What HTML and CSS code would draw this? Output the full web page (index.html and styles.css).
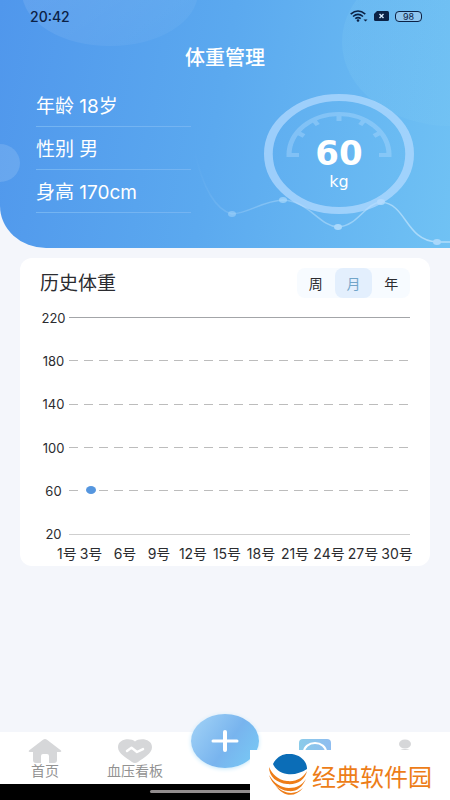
FILE: index.html
```html
<!DOCTYPE html>
<html lang="zh-CN">
<head>
<meta charset="utf-8">
<meta name="viewport" content="width=device-width, initial-scale=1">
<title>体重管理</title>
<link rel="stylesheet" href="styles.css">
</head>
<body>
<header class="hero">
  <svg class="hero-art" viewBox="0 0 450 248" preserveAspectRatio="none" aria-hidden="true">
    <defs>
      <linearGradient id="bubble" x1="0" y1="0" x2="1" y2="1"><stop offset="0" stop-color="#fff" stop-opacity=".12"/><stop offset="1" stop-color="#fff" stop-opacity=".03"/></linearGradient>
      <linearGradient id="glow" x1="0" y1="0" x2="1" y2="0"><stop offset="0" stop-color="#8bd2f4" stop-opacity=".16"/><stop offset="1" stop-color="#8bd2f4" stop-opacity=".04"/></linearGradient>
      <linearGradient id="trend" x1="0" x2="1" y1="0" y2="0"><stop offset="0" stop-color="#fff" stop-opacity="0"/><stop offset=".3" stop-color="#d5edff" stop-opacity=".3"/><stop offset="1" stop-color="#d5edff" stop-opacity=".65"/></linearGradient>
    </defs>
    <ellipse cx="110" cy="-8" rx="88" ry="54" fill="url(#bubble)"/>
    <ellipse cx="0" cy="163" rx="20" ry="19" fill="#fff" opacity=".13"/>
    <ellipse cx="450" cy="42" rx="108" ry="84" fill="url(#glow)"/>
    <path d="M194 150C201 180 212 209 232 214C250 213 262 201 283 200C309 201 319 226 338 227C358 226 365 203 381 202C407 204 405 240 437 242H450" fill="none" stroke="url(#trend)" stroke-width="1.5"/>
    <g fill="#a9d8fb"><ellipse cx="232" cy="214" rx="4" ry="3" opacity=".5"/><ellipse cx="283" cy="200" rx="4" ry="3" opacity=".7"/><ellipse cx="338" cy="227" rx="4" ry="3"/><ellipse cx="381" cy="202" rx="4" ry="3"/><ellipse cx="437" cy="242" rx="4" ry="3"/></g>
  </svg>
  <div class="status">
    <time>20:42</time>
    <div class="status-icons">
      <svg width="18" height="12" viewBox="0 0 18 12" aria-hidden="true"><g fill="none" stroke="#0b2145" stroke-width="1.6"><path d="M.7 4.2Q8-2.2 15.3 4.2M3 6.5Q8 2.2 13 6.5M5.3 8.7Q8 6.4 10.7 8.7"/></g><circle cx="8" cy="10.5" r="1.3" fill="#0b2145"/><path d="M13.5 9.5h4l-2 2z" fill="#0b2145"/></svg>
      <svg width="15" height="10" viewBox="0 0 15 10" aria-hidden="true"><path d="M3 0H13.500Q15 0 15 1.500V8.500Q15 10 13.500 10H1.500Q0 10 0 8.500V3Z" fill="#0b2145"/><path d="M5.500 3l4 4m0-4l-4 4" stroke="#d7ebff" stroke-width="1.400"/></svg>
      <span class="battery">98</span>
    </div>
  </div>
  <h1>体重管理</h1>
  <div class="summary">
    <ul class="profile">
      <li>年龄 18岁</li>
      <li>性别 男</li>
      <li>身高 170cm</li>
    </ul>
    <div class="gauge">
      <svg class="dial" viewBox="0 0 150 120" aria-hidden="true">
        <g transform="scale(1.25 1)" fill="none" stroke="#b6dcff">
          <circle cx="60" cy="60" r="56.500" stroke-width="7" opacity=".7"/>
          <path opacity=".38" d="M18 61H28M102 61H92M20 61A40 41 0 0 1 100 61M26 38L32 42M94 38L88 42M39 25L43 31M81 25L77 31M60 20V27" stroke-width="4"/>
        </g>
      </svg>
      <strong>60</strong>
      <span>kg</span>
    </div>
  </div>
</header>
<main>
  <section class="card">
    <div class="card-head">
      <h2>历史体重</h2>
      <div class="tabs">
        <button type="button">周</button>
        <button type="button" class="active">月</button>
        <button type="button">年</button>
      </div>
    </div>
    <div class="chart">
      <div class="level solid"><span>220</span><i></i></div>
      <div class="level"><span>180</span><i></i></div>
      <div class="level"><span>140</span><i></i></div>
      <div class="level"><span>100</span><i></i></div>
      <div class="level"><span>60</span><i><b class="point"></b></i></div>
      <div class="level solid base"><span>20</span><i></i></div>
    </div>
    <div class="days">
      <span>1号</span><span>3号</span><span>6号</span><span>9号</span><span>12号</span><span>15号</span><span>18号</span><span>21号</span><span>24号</span><span>27号</span><span>30号</span>
    </div>
  </section>
</main>
<footer>
  <nav>
    <a href="#home">
      <svg width="34" height="24" viewBox="0 0 34 24" aria-hidden="true"><path d="M15 .8Q17-.6 19 .8L33 11.500Q34 13 32 13H29V21Q29 24 26 24H21V17Q21 15 19 15H15Q13 15 13 17V24H8Q5 24 5 21V13H2Q0 13 1 11.500Z" fill="#d6d7d9"/></svg>
      <span>首页</span>
    </a>
    <a href="#pressure">
      <svg width="34" height="24" viewBox="0 0 34 25" preserveAspectRatio="none" aria-hidden="true"><path d="M17 2.500C13-1.500 0-1 0 8.500C0 15 8 19 14 24Q17 26 20 24C26 19 34 15 34 8.500C34-1 21-1.500 17 2.500Z" fill="#d6d7d9"/><path d="M9 12.500L13.500 9L19 13.500L25 10.500" fill="none" stroke="#fff" stroke-width="2.500" stroke-linecap="round" stroke-linejoin="round"/></svg>
      <span>血压看板</span>
    </a>
    <button class="add" type="button" aria-label="添加">
      <svg width="28" height="22" viewBox="0 0 28 22" aria-hidden="true"><path d="M2 11H26" stroke="#fff" stroke-width="3" stroke-linecap="round"/><path d="M14 2V20" stroke="#fff" stroke-width="4" stroke-linecap="round"/></svg>
    </button>
    <a href="#weight" aria-label="体重">
      <svg width="32" height="25" viewBox="0 0 32 25" aria-hidden="true"><defs><linearGradient id="scale"><stop offset="0" stop-color="#8acbe9"/><stop offset="1" stop-color="#8fbdf0"/></linearGradient></defs><rect width="32" height="25" rx="4" fill="url(#scale)"/><ellipse cx="16" cy="13" rx="11" ry="9" fill="none" stroke="#fff" stroke-width="2"/></svg>
    </a>
    <a href="#me" aria-label="我的">
      <svg width="32" height="25" viewBox="0 0 32 25" aria-hidden="true"><ellipse cx="16" cy="5" rx="6" ry="4.500" fill="#d6d7d9"/><path d="M5 25Q5 10 16 10T27 25Z" fill="#d6d7d9"/></svg>
    </a>
  </nav>
  <div class="system"><i></i></div>
  <div class="brand">
    <svg width="40" height="42" viewBox="0 0 40 42" aria-hidden="true"><path d="M5 10C9 2 16-1 24 0C32 1 39 7 39 15C33 19 26 21 19 20C12 19 7 15 5 10Z" fill="#0b6db7"/><g fill="#ee7d18"><path d="M1 13C4 20 10 26 19 27C28 28 35 24 39 17C37 26 29 31 19 30C9 29 1 23 1 13Z"/><path d="M1 21C6 29 13 34 21 34C29 34 34 31 38 25C34 34 28 38 20 37C11 36 4 30 1 21Z"/><path d="M7 31C17 41 27 41 35 34C27 44 15 43 7 31Z"/></g></svg>
    <span>经典软件园</span>
  </div>
</footer>
</body>
</html>
```
FILE: styles.css
```css
* { box-sizing: border-box; }
body {
  margin: 0;
  min-height: 100vh;
  display: flex;
  flex-direction: column;
  background: #f4f6fb;
  color: #2b2c30;
  font-family: Inter, "Noto Sans CJK SC", sans-serif;
}
h1, h2, ul { margin: 0; padding: 0; font-weight: 400; }
button { border: 0; padding: 0; font: inherit; color: inherit; background: none; }

.hero {
  position: relative;
  overflow: hidden;
  min-height: 248px;
  border-bottom-left-radius: 46px 42px;
  background: linear-gradient(100deg, #5097ec 0%, #5ba9ef 48%, #70c2f4 100%);
  color: #fff;
}
.hero-art { position: absolute; inset: 0; width: 100%; height: 100%; }
.status, .hero h1, .summary { position: relative; }
.status {
  display: flex;
  justify-content: space-between;
  align-items: center;
  height: 32px;
  padding: 0 28px 0 30px;
  color: #0b2145;
}
.status time { font-size: 14px; font-weight: 500; }
.status-icons { display: flex; align-items: center; gap: 6px; }
.battery {
  width: 27px;
  height: 11px;
  border: 1px solid #0b2145;
  border-radius: 4px;
  background: #8fc5ee;
  font-size: 9px;
  line-height: 9px;
  text-align: center;
}
.hero h1 { font-size: 20px; font-weight: 500; line-height: 28px; margin-top: 12px; text-align: center; }
.summary {
  display: flex;
  justify-content: space-between;
  align-items: flex-start;
  padding: 12px 36px 0;
}
.profile { flex: 0 1 155px; list-style: none; font-size: 19px; }
.profile li { height: 43px; line-height: 46px; border-bottom: 1px solid #74b4f2; white-space: nowrap; }
.gauge {
  position: relative;
  width: 150px;
  height: 120px;
  margin-top: 10px;
  display: flex;
  flex-direction: column;
  align-items: center;
  gap: 2px;
  padding-top: 42px;
  font-family: "DejaVu Sans", sans-serif;
}
.dial { position: absolute; inset: 0; }
.gauge strong { position: relative; font-size: 34px; line-height: 34px; }
.gauge span { position: relative; font-size: 16px; line-height: 20px; }

main { flex: 1; padding: 10px 20px; }
.card { background: #fff; border-radius: 12px; padding: 10px 20px 2px; }
.card-head { display: flex; justify-content: space-between; align-items: center; }
.card h2 { font-size: 19px; line-height: 28px; padding-top: 2px; }
.tabs { display: flex; width: 113px; border-radius: 8px; background: #f7fbff; }
.tabs button { flex: 1; height: 30px; border-radius: 8px; font-size: 14px; }
.tabs .active { background: #e3effd; color: #71a5c9; }
.chart { display: grid; grid-template-rows: repeat(6, 1fr); height: 260px; margin-top: -2px; font-size: 13px; }
.level { display: flex; align-items: center; gap: 2px; }
.level span { width: 27px; text-align: center; }
.level i {
  position: relative;
  flex: 1;
  height: 1px;
  background: repeating-linear-gradient(90deg, #bcbcbc 0 9px, transparent 9px 15px);
}
.level.solid i { background: #a3a5a8; }
.level.base i { background: #cfcfcf; }
.point {
  position: absolute;
  left: 17px;
  top: -4px;
  width: 10px;
  height: 8px;
  border-radius: 50%;
  background: #5596df;
  box-shadow: 0 0 0 2px #fff;
}
.days {
  display: grid;
  grid-template-columns: 17px repeat(10, 1fr);
  margin: -13px -4px 0 17px;
  font-size: 14px;
  line-height: 21px;
  text-align: center;
  white-space: nowrap;
}

footer { position: relative; }
nav { display: grid; grid-template-columns: repeat(5, 1fr); height: 52px; background: #fff; }
nav a {
  display: flex;
  flex-direction: column;
  align-items: center;
  padding-top: 7px;
  color: #929292;
  font-size: 14px;
  line-height: 16px;
  text-decoration: none;
}
nav svg { flex: none; }
.add {
  width: 68px;
  height: 54px;
  margin-top: -18px;
  justify-self: center;
  display: grid;
  place-items: center;
  border-radius: 50%;
  background: linear-gradient(125deg, #a4d4f7, #78b4ee 55%, #77ccf6);
  box-shadow: 0 1px 4px #c3e7fa;
}
.system { height: 16px; background: #000; }
.system i { display: block; width: 150px; height: 3px; margin: 0 auto; border-radius: 2px; background: #918c8d; position: relative; top: 6px; }
.brand {
  position: absolute;
  right: 0;
  bottom: 0;
  display: flex;
  align-items: center;
  gap: 4px;
  width: 200px;
  height: 50px;
  padding-left: 18px;
  background: #fff;
  color: #ed7d18;
  font-size: 24px;
  white-space: nowrap;
}
```
